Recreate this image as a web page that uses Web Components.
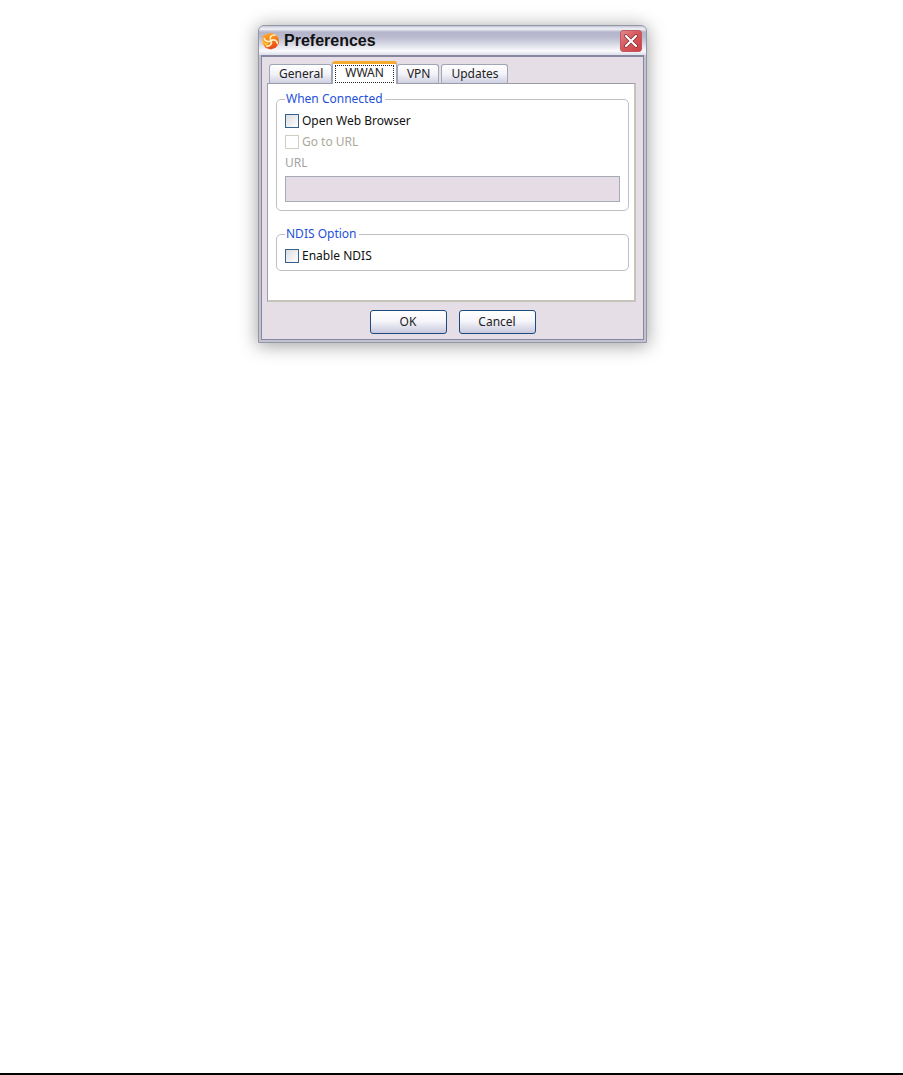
<!DOCTYPE html>
<html lang="en">
<head>
<meta charset="utf-8">
<title>Preferences</title>
<style>
    body {
        margin: 0;
        background: #fff;
        color: #111;
        font-family: "Noto Sans", "Open Sans", sans-serif;
        font-size: 12px;
        line-height: 16px;
    }
</style>
</head>
<body>
<document-page>
    <xp-window data-title="Preferences">
        <xp-tabs data-tabs="General,WWAN,VPN,Updates" data-active="WWAN">
            <xp-group data-title="When Connected">
                <xp-checkbox data-label="Open Web Browser"></xp-checkbox>
                <xp-checkbox data-label="Go to URL" disabled></xp-checkbox>
                <xp-field data-label="URL" disabled></xp-field>
            </xp-group>
            <xp-group data-title="NDIS Option">
                <xp-checkbox data-label="Enable NDIS"></xp-checkbox>
            </xp-group>
        </xp-tabs>
        <xp-button slot="actions">OK</xp-button>
        <xp-button slot="actions">Cancel</xp-button>
    </xp-window>
</document-page>

<script>
const make_template = (html) => {
    const template = document.createElement("template");
    template.innerHTML = html;
    return template;
};

class BaseElement extends HTMLElement {
    constructor() {
        super();
        this.attachShadow({ mode: "open" });
        this.shadowRoot.append(this.constructor.template.content.cloneNode(true));
    }

    $(selector) {
        return this.shadowRoot.querySelector(selector);
    }
}


// Page
customElements.define("document-page", class extends BaseElement {
    static template = make_template(/*html*/ `
<style>
    :host {
        display: flex;
        flex-direction: column;
        box-sizing: border-box;
        min-height: 100vh;
        border-bottom: 2px solid #000;
    }

    main {
        display: flex;
        justify-content: center;
        padding: 25px 12px 24px 14px;
    }
</style>

<main><slot></slot></main>
`);
});


// Window
customElements.define("xp-window", class extends BaseElement {
    static template = make_template(/*html*/ `
<style>
    :host {
        display: block;
        box-sizing: border-box;
        width: 100%;
        max-width: 389px;
        border: 1px solid #9496a6;
        border-radius: 6px 6px 0 0;
        background: #c3c3d0;
        box-shadow: 0 2px 18px 1px rgba(0, 0, 0, 0.36);
    }

    header {
        display: flex;
        align-items: center;
        gap: 4px;
        height: 29px;
        padding: 0 4px 0 3px;
        border-radius: 5px 5px 0 0;
        background: linear-gradient(#c4c6d6 0, #f2f3f8 3px, #b4b5cb 6px, #b9bace 11px, #d8d9e5 18px, #fbfbfd 25px, #e2e3ed 28px);
    }

    h1 {
        flex: 1;
        margin: 0;
        color: #111;
        font: bold 16px/20px "Liberation Sans", sans-serif;
    }

    svg {
        display: block;
        flex: none;
    }

    button {
        display: grid;
        place-items: center;
        width: 22px;
        height: 22px;
        padding: 0;
        border: 1px solid #bd5960;
        border-radius: 3px;
        background: linear-gradient(135deg, #e08a8c, #d8585c 45%, #cf4046);
    }

    .client {
        margin: 0 2px 2px;
        padding: 4px 7px 5px 5px;
        border: 1px solid #8788a0;
        border-top-width: 2px;
        background: #e6dee6;
    }

    footer {
        display: flex;
        justify-content: center;
        gap: 12px;
        padding: 8px 0 0 2px;
    }
</style>

<header>
    <svg width="18" height="18" viewBox="0 0 18 18" aria-hidden="true">
        <defs>
            <linearGradient id="flame" x1="0" y1="0" x2="0.3" y2="1">
                <stop offset="0" stop-color="#ffb52c"></stop>
                <stop offset="0.5" stop-color="#fb8118"></stop>
                <stop offset="1" stop-color="#e94d19"></stop>
            </linearGradient>
        </defs>
        <path d="M1 3.5 5 2 9 .8l4.5 1.4 3.2 4.3.2 5-3.2 4.3-5 1.6-5-1.5L.8 11.5.5 7Z" fill="url(#flame)"></path>
        <path d="M1 7C2 10 4 11.6 7 10.8L4.2 14.6.8 11.5Z" fill="#ffbd25"></path>
        <g fill="none" stroke="#fff0c0" stroke-width="1.7" stroke-linecap="round">
            <path d="M8.8 8.6C7 5.6 9 2.8 13 3"></path>
            <path d="M8.8 8.6c3.4-1.6 6.4-.2 6.6 2.9"></path>
            <path d="M8.8 8.6c1.8 3-.6 5.6-4 5.8"></path>
            <path d="M8.8 8.6C6.5 10.6 3 9.5 2.2 6.6"></path>
        </g>
    </svg>
    <h1></h1>
    <button type="button" aria-label="Close">
        <svg width="14" height="14" viewBox="0 0 14 14">
            <path d="m2 2 10 10M12 2 2 12" stroke="#7e2f38" stroke-width="3.6" stroke-linecap="round"></path>
            <path d="m2 2 10 10M12 2 2 12" stroke="#fff" stroke-width="2.2" stroke-linecap="round"></path>
        </svg>
    </button>
</header>
<div class="client">
    <slot></slot>
    <footer><slot name="actions"></slot></footer>
</div>
`);

    connectedCallback() {
        this.$("h1").textContent = this.dataset["title"];
    }
});


// Tabs
customElements.define("xp-tabs", class extends BaseElement {
    static template = make_template(/*html*/ `
<style>
    :host {
        display: block;
    }

    nav {
        display: flex;
        align-items: flex-end;
        height: 22px;
        padding-left: 2px;
    }

    button {
        box-sizing: border-box;
        height: 19px;
        margin-right: 2px;
        padding: 0 8px 0 9px;
        border: 1px solid #9fa5b4;
        border-bottom: 0;
        border-radius: 3px 3px 0 0;
        background: linear-gradient(#fff, #f2f2f8 50%, #cfd0e2);
        color: #222;
        font: inherit;
        line-height: 18px;
    }

    button[aria-selected="true"] {
        position: relative;
        height: 23px;
        margin: 0 0 -1px -2px;
        padding: 0 2px 1px;
        border-top: 3px solid #f5ab2d;
        background: #fff;
    }

    button[aria-selected="true"] span {
        display: block;
        padding: 0 9px 2px;
        border: 1px dotted #222;
        line-height: 14px;
    }

    section {
        display: flex;
        flex-direction: column;
        gap: 15px;
        padding: 7px 5px 29px 8px;
        border: 1px solid #9a9ca8;
        border-right: 2px solid #c6c3ba;
        border-bottom: 2px solid #c6c3ba;
        background: #fff;
    }
</style>

<nav role="tablist"></nav>
<section role="tabpanel"><slot></slot></section>
`);

    connectedCallback() {
        const tabs = this.dataset["tabs"].split(",").map(name => {
            const button = document.createElement("button");
            const label = document.createElement("span");
            label.textContent = name;
            button.type = "button";
            button.setAttribute("role", "tab");
            button.setAttribute("aria-selected", name == this.dataset["active"]);
            button.append(label);
            return button;
        });
        this.$("nav").replaceChildren(...tabs);
    }
});


// Group box
customElements.define("xp-group", class extends BaseElement {
    static template = make_template(/*html*/ `
<style>
    :host {
        display: block;
    }

    fieldset {
        min-width: 0;
        margin: 0;
        padding: 3px 8px 4px;
        border: 1px solid #bfc0c4;
        border-radius: 5px;
    }

    legend {
        padding: 0 2px 0 1px;
        color: #2450d8;
    }
</style>

<fieldset>
    <legend></legend>
    <slot></slot>
</fieldset>
`);

    connectedCallback() {
        this.$("legend").textContent = this.dataset["title"];
    }
});


// Checkbox
customElements.define("xp-checkbox", class extends BaseElement {
    static template = make_template(/*html*/ `
<style>
    :host {
        display: block;
    }

    label {
        display: flex;
        align-items: center;
        gap: 3px;
        height: 21px;
    }

    input {
        appearance: none;
        box-sizing: border-box;
        flex: none;
        width: 14px;
        height: 14px;
        margin: 0;
        border: 1px solid #33628f;
        background: linear-gradient(135deg, #dcdce0, #fff);
    }

    input:checked {
        background: #33628f;
        box-shadow: inset 0 0 0 2px #fff;
    }

    :host([disabled]) label {
        color: #aaa99c;
    }

    :host([disabled]) input {
        border-color: #cfcec0;
        background: #fff;
    }
</style>

<label><input type="checkbox"><span></span></label>
`);

    connectedCallback() {
        this.$("span").textContent = this.dataset["label"];
        this.$("input").disabled = this.hasAttribute("disabled");
    }
});


// Text field
customElements.define("xp-field", class extends BaseElement {
    static template = make_template(/*html*/ `
<style>
    :host {
        display: block;
        padding-bottom: 4px;
    }

    label {
        display: block;
        line-height: 21px;
    }

    input {
        display: block;
        box-sizing: border-box;
        width: 100%;
        height: 26px;
        margin: 3px 0 0;
        padding: 0 4px;
        border: 1px solid #a5acb5;
        border-radius: 0;
        background: #fff;
        font: inherit;
    }

    :host([disabled]) label {
        color: #a3a3a3;
    }

    :host([disabled]) input {
        background: #e6dce6;
    }
</style>

<label for="field"></label>
<input id="field" type="text">
`);

    connectedCallback() {
        this.$("label").textContent = this.dataset["label"];
        this.$("input").disabled = this.hasAttribute("disabled");
    }
});


// Button
customElements.define("xp-button", class extends BaseElement {
    static template = make_template(/*html*/ `
<style>
    :host {
        display: block;
    }

    button {
        display: block;
        box-sizing: border-box;
        min-width: 77px;
        height: 24px;
        padding: 0 8px;
        border: 1px solid #1c4a7c;
        border-radius: 3px;
        background: linear-gradient(#fff, #f6f6fa 45%, #c9c9df);
        color: #222;
        font: inherit;
    }
</style>

<button type="button"><slot></slot></button>
`);
});
</script>
</body>
</html>
